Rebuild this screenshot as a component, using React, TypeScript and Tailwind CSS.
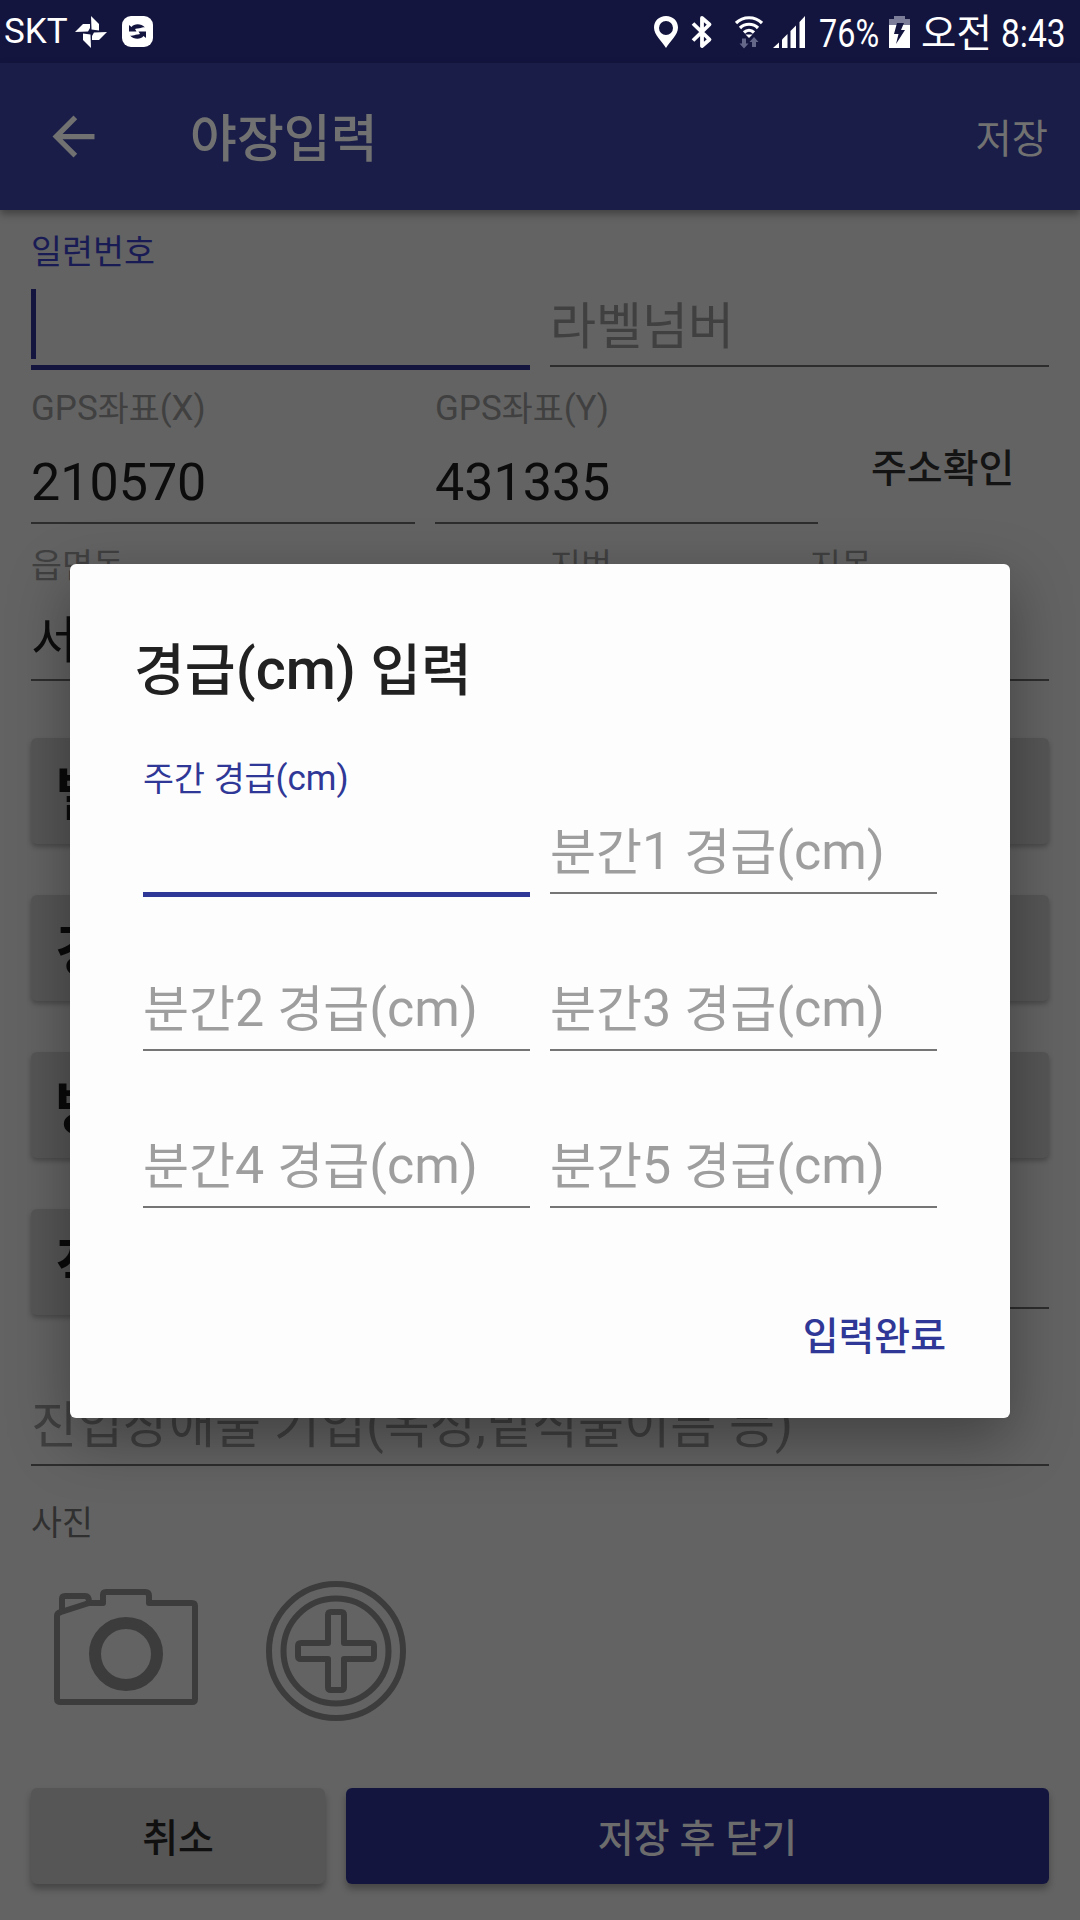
import React from "react";

// Hangul runs are set a little smaller and lower than the Latin text beside them
function Ko({ children }: { children: string }) {
  return (
    <>
      {children.split(/([\uac00-\ud7a3]+)/).map((part, i) =>
        i % 2 ? (
          <span key={i} className="align-[-0.02em] text-[0.962em] leading-none">{part}</span>
        ) : (
          part
        )
      )}
    </>
  );
}

type FieldProps = {
  label?: string;
  value?: string;
  hint?: string;
  active?: boolean;
  cursor?: boolean;
  className?: string;
};

function Field({ label, value, hint, active, cursor, className = "" }: FieldProps) {
  return (
    <div className={`flex h-[157px] flex-col ${className}`}>
      <div className={`mt-[13px] h-[40px] text-[35px] leading-[42px] whitespace-nowrap ${active ? "text-[#191b55]" : "text-[#404040]"}`}>
        {label && <Ko>{label}</Ko>}
      </div>
      <div className="mt-[18px] h-[70px] text-[52px] leading-[74px] whitespace-nowrap">
        {cursor && <div className="h-[70px] w-[5px] bg-[#13153f]" />}
        {value && <span className="text-[#0c0c0c]"><Ko>{value}</Ko></span>}
        {hint && <span className="text-[#404040]"><Ko>{hint}</Ko></span>}
      </div>
      <div className={active ? "mt-[6px] h-[5px] bg-[#13153f]" : "mt-[6px] h-[2px] bg-[#2d2d2d]"} />
    </div>
  );
}

function SectionButton({ children, className = "" }: { children: string; className?: string }) {
  return (
    <div className="h-[157px] pt-[49px]">
      <button className={`flex h-[106px] items-center rounded-[6px] bg-[#565656] pt-[5px] pl-[24px] text-left text-[60px] font-bold text-[#0a0a0a] shadow-[0_3px_5px_rgba(0,0,0,0.25)] ${className}`}>
        <span><Ko>{children}</Ko></span>
      </button>
    </div>
  );
}

function DialogField({ label, hint, active }: { label?: string; hint?: string; active?: boolean }) {
  return (
    <div className="flex h-[157px] flex-col">
      <div className="mt-[13px] h-[40px] text-[35px] leading-[41px] text-[#303897]">
        {label && <Ko>{label}</Ko>}
      </div>
      <div className="mt-[18px] h-[70px] text-[52px] leading-[71px] whitespace-nowrap text-[#9e9e9e]">
        {hint && <Ko>{hint}</Ko>}
      </div>
      <div className={active ? "mt-[6px] h-[5px] bg-[#303897]" : "mt-[6px] h-[2px] bg-[#757575]"} />
    </div>
  );
}

function StatusBar() {
  return (
    <div className="flex h-[63px] items-center bg-[#13153f] pl-[4px] text-white">
      <span className="w-[71px] pt-[1px] text-[35px] leading-[62px]">SKT</span>
      <svg width="32" height="32" viewBox="0 0 32 32" fill="#fff">
        <path d="M16 0L24 8V14.500L16.500 13.500Z" />
        <path d="M0 16L8 8H15V12L13 15.500Z" />
        <path d="M32 16L24 24H17V20L19 16.500Z" />
        <path d="M16 32L8 24V17.500L15.500 18.500Z" />
      </svg>
      <svg className="ml-[15px]" width="31" height="31" viewBox="0 0 31 31">
        <rect width="31" height="31" rx="9" fill="#fff" />
        <g fill="#13153f">
          <path d="M7 9L9.500 11C12 7.500 19 7 23 11.500C20 10.500 18 13 15 12.500L13 13L14.500 15.500H7Z" />
          <path d="M24 22L21.500 20C19 23.500 12 24 8 19.500C11 20.500 13 18 16 18.500L18 18L16.500 15.500H24Z" />
        </g>
      </svg>

      <svg className="ml-[501px]" width="24" height="32" viewBox="0 0 24 32">
        <path fillRule="evenodd" d="M12 0C5 0 0 5 0 11.500C0 19 8 25 12 32C16 25 24 19 24 11.500C24 5 19 0 12 0ZM12 5A7 7 0 1 1 12 19A7 7 0 1 1 12 5Z" fill="#fff" />
      </svg>
      <svg className="ml-[13px]" width="22" height="34" viewBox="0 0 22 34" fill="none" stroke="#fff" strokeWidth="3.800">
        <path d="M2 8.500L18.500 24.500L11 31V3L18.500 9.500L2 25.500" strokeLinejoin="round" />
      </svg>
      <svg className="ml-[22px]" width="28" height="34" viewBox="0 0 28 34" fill="none" stroke="#fff" strokeWidth="3.200">
        <path d="M1 8C8 1 20 1 27 8" />
        <path d="M5 13C10 8 18 8 23 13" />
        <path d="M9 17.500C12 14.500 16 14.500 19 17.500" />
        <path d="M14 23L10.500 19.500H17.500Z" fill="#fff" stroke="none" />
        <path d="M7 23.500H11V28.500H13.500L9 33.500L4.500 28.500H7Z" fill="#656789" stroke="none" />
        <path d="M17 32H21V27H23.500L19 22L14.500 27H17Z" fill="#656789" stroke="none" />
      </svg>
      <svg className="ml-[10px]" width="33" height="32" viewBox="0 0 33 32" fill="#fff">
        <path d="M0 32L6 26.500V32Z" />
        <path d="M9 23.500L14.500 18V32H9Z" />
        <path d="M17.500 15L23 9.500V32H17.500Z" />
        <path d="M26.500 6L32 0V32H26.500Z" />
      </svg>
      <span className="ml-[13px] w-[70px] origin-left scale-x-[0.83] pt-[4px] text-[39px] leading-[60px]">76%</span>
      <svg width="21" height="32" viewBox="0 0 21 32">
        <path d="M5 0H16V3H21V9H0V3H5Z" fill="#7c7d98" />
        <path d="M0 9H21V32H0Z" fill="#fff" />
        <path d="M8 7H15L12 14H16L7 28L9.500 18H5Z" fill="#13153f" />
      </svg>
      <span className="ml-[11px] w-[80px] pt-[3px] text-[40px] leading-[60px] whitespace-nowrap"><Ko>오전</Ko></span>
      <span className="origin-left scale-x-[0.86] pt-[4px] text-[39px] leading-[60px]">8:43</span>
    </div>
  );
}

function BackIcon() {
  return (
    <svg className="ml-[42px]" width="63" height="63" viewBox="0 0 24 24" fill="currentColor">
      <path d="M20 11H7.830l5.590-5.590L12 4l-8 8 8 8 1.410-1.410L7.830 13H20v-2z" />
    </svg>
  );
}

function CameraIcon() {
  return (
    <svg width="146" height="118" viewBox="0 0 146 118" fill="none" stroke="#3c3c3c" strokeWidth="6" strokeLinejoin="round">
      <path d="M4 28Q4 25 8 24L36 15H50V7Q50 4 53 4H92Q96 4 96 8V15H139Q142 15 142 18V111Q142 114 139 114H8Q4 114 4 111Z" />
      <path d="M9 23V11Q9 8 12 8H32Q36 8 36 14" />
      <circle cx="73" cy="66" r="31" strokeWidth="12" />
    </svg>
  );
}

function AddIcon() {
  return (
    <svg width="140" height="142" viewBox="0 0 140 142" fill="none" stroke="#3c3c3c" strokeWidth="6">
      <circle cx="70" cy="71" r="67" />
      <circle cx="70" cy="71" r="52.500" />
      <path strokeLinejoin="round" d="M65 32H75Q78 32 78 35V63H105Q108 63 108 66V76Q108 79 105 79H78V107Q78 110 75 110H65Q62 110 62 107V79H35Q32 79 32 76V66Q32 63 35 63H62V35Q62 32 65 32Z" />
    </svg>
  );
}

function EntryDialog() {
  return (
    <div className="absolute top-[564px] left-[70px] flex h-[854px] w-[940px] flex-col rounded-[6px] bg-[#fdfdfd] shadow-[0_20px_60px_rgba(0,0,0,0.35)]">
      <h2 className="mt-[70px] h-[70px] pl-[64px] text-[57.500px] leading-[71px] font-medium text-[#212121]">
        <Ko>경급(cm) 입력</Ko>
      </h2>
      <div className="mt-[41px] grid grid-cols-2 gap-x-[20px] px-[73px]">
        <DialogField label="주간 경급(cm)" active />
        <DialogField hint="분간1 경급(cm)" />
        <DialogField hint="분간2 경급(cm)" />
        <DialogField hint="분간3 경급(cm)" />
        <DialogField hint="분간4 경급(cm)" />
        <DialogField hint="분간5 경급(cm)" />
      </div>
      <button className="mt-[89px] mr-[64px] h-[60px] self-end text-[40.500px] leading-[60px] font-medium text-[#303897]">
        <Ko>입력완료</Ko>
      </button>
    </div>
  );
}

export default function App() {
  return (
    <div className="relative flex h-[1920px] w-[1080px] flex-col overflow-hidden bg-[#636363] font-[Roboto,'Noto_Sans_CJK_KR',sans-serif]">
      <StatusBar />
      <header className="relative flex h-[147px] items-center bg-[#191d48] text-[#717171] shadow-[0_4px_8px_rgba(0,0,0,0.35)]">
        <BackIcon />
        <h1 className="ml-[85px] flex-1 pt-[4px] text-[53px] font-medium"><Ko>야장입력</Ko></h1>
        <button className="mr-[32px] pt-[4px] text-[41px]"><Ko>저장</Ko></button>
      </header>

      <main className="flex flex-1 flex-col px-[31px] pt-[8px]">
        <div className="grid grid-cols-2 gap-[20px]">
          <Field label="일련번호" active cursor />
          <Field hint="라벨넘버" />
        </div>
        <div className="flex gap-[20px]">
          <Field className="w-[384px]" label="GPS좌표(X)" value="210570" />
          <Field className="w-[383px]" label="GPS좌표(Y)" value="431335" />
          <button className="mt-[62px] h-[60px] flex-1 pl-[33px] text-left text-[40.500px] leading-[60px] font-medium text-[#141414]">
            <Ko>주소확인</Ko>
          </button>
        </div>
        <div className="flex gap-[20px]">
          <Field className="w-[499px]" label="읍면동" value="서" />
          <Field className="w-[240px]" label="지번" />
          <Field className="w-[239px]" label="지목" />
        </div>
        <SectionButton className="w-full">벌</SectionButton>
        <SectionButton className="w-full">경</SectionButton>
        <SectionButton className="w-full">방</SectionButton>
        <div className="flex gap-[20px]">
          <SectionButton className="w-[499px]">직</SectionButton>
          <Field className="flex-1" />
        </div>
        <Field hint="진입장애물 기입(옥정,밑식물이름 등)" />

        <p className="mt-[25px] h-[48px] text-[35px] leading-[48px] text-[#303030]"><Ko>사진</Ko></p>
        <div className="mt-[33px] flex h-[142px] gap-[67px] pl-[22px]">
          <div className="pt-[8px]">
            <CameraIcon />
          </div>
          <AddIcon />
        </div>

        <div className="mt-[66px] flex h-[96px] gap-[21px] text-[40.500px] font-medium">
          <button className="w-[294px] rounded-[6px] bg-[#565656] pt-[3px] text-[#101010] shadow-[0_5px_7px_rgba(0,0,0,0.3)]">
            <Ko>취소</Ko>
          </button>
          <button className="flex-1 rounded-[6px] bg-[#13153f] pt-[3px] text-[#6c6c6c] shadow-[0_5px_7px_rgba(0,0,0,0.3)]">
            <Ko>저장 후 닫기</Ko>
          </button>
        </div>
      </main>

      <EntryDialog />
    </div>
  );
}
